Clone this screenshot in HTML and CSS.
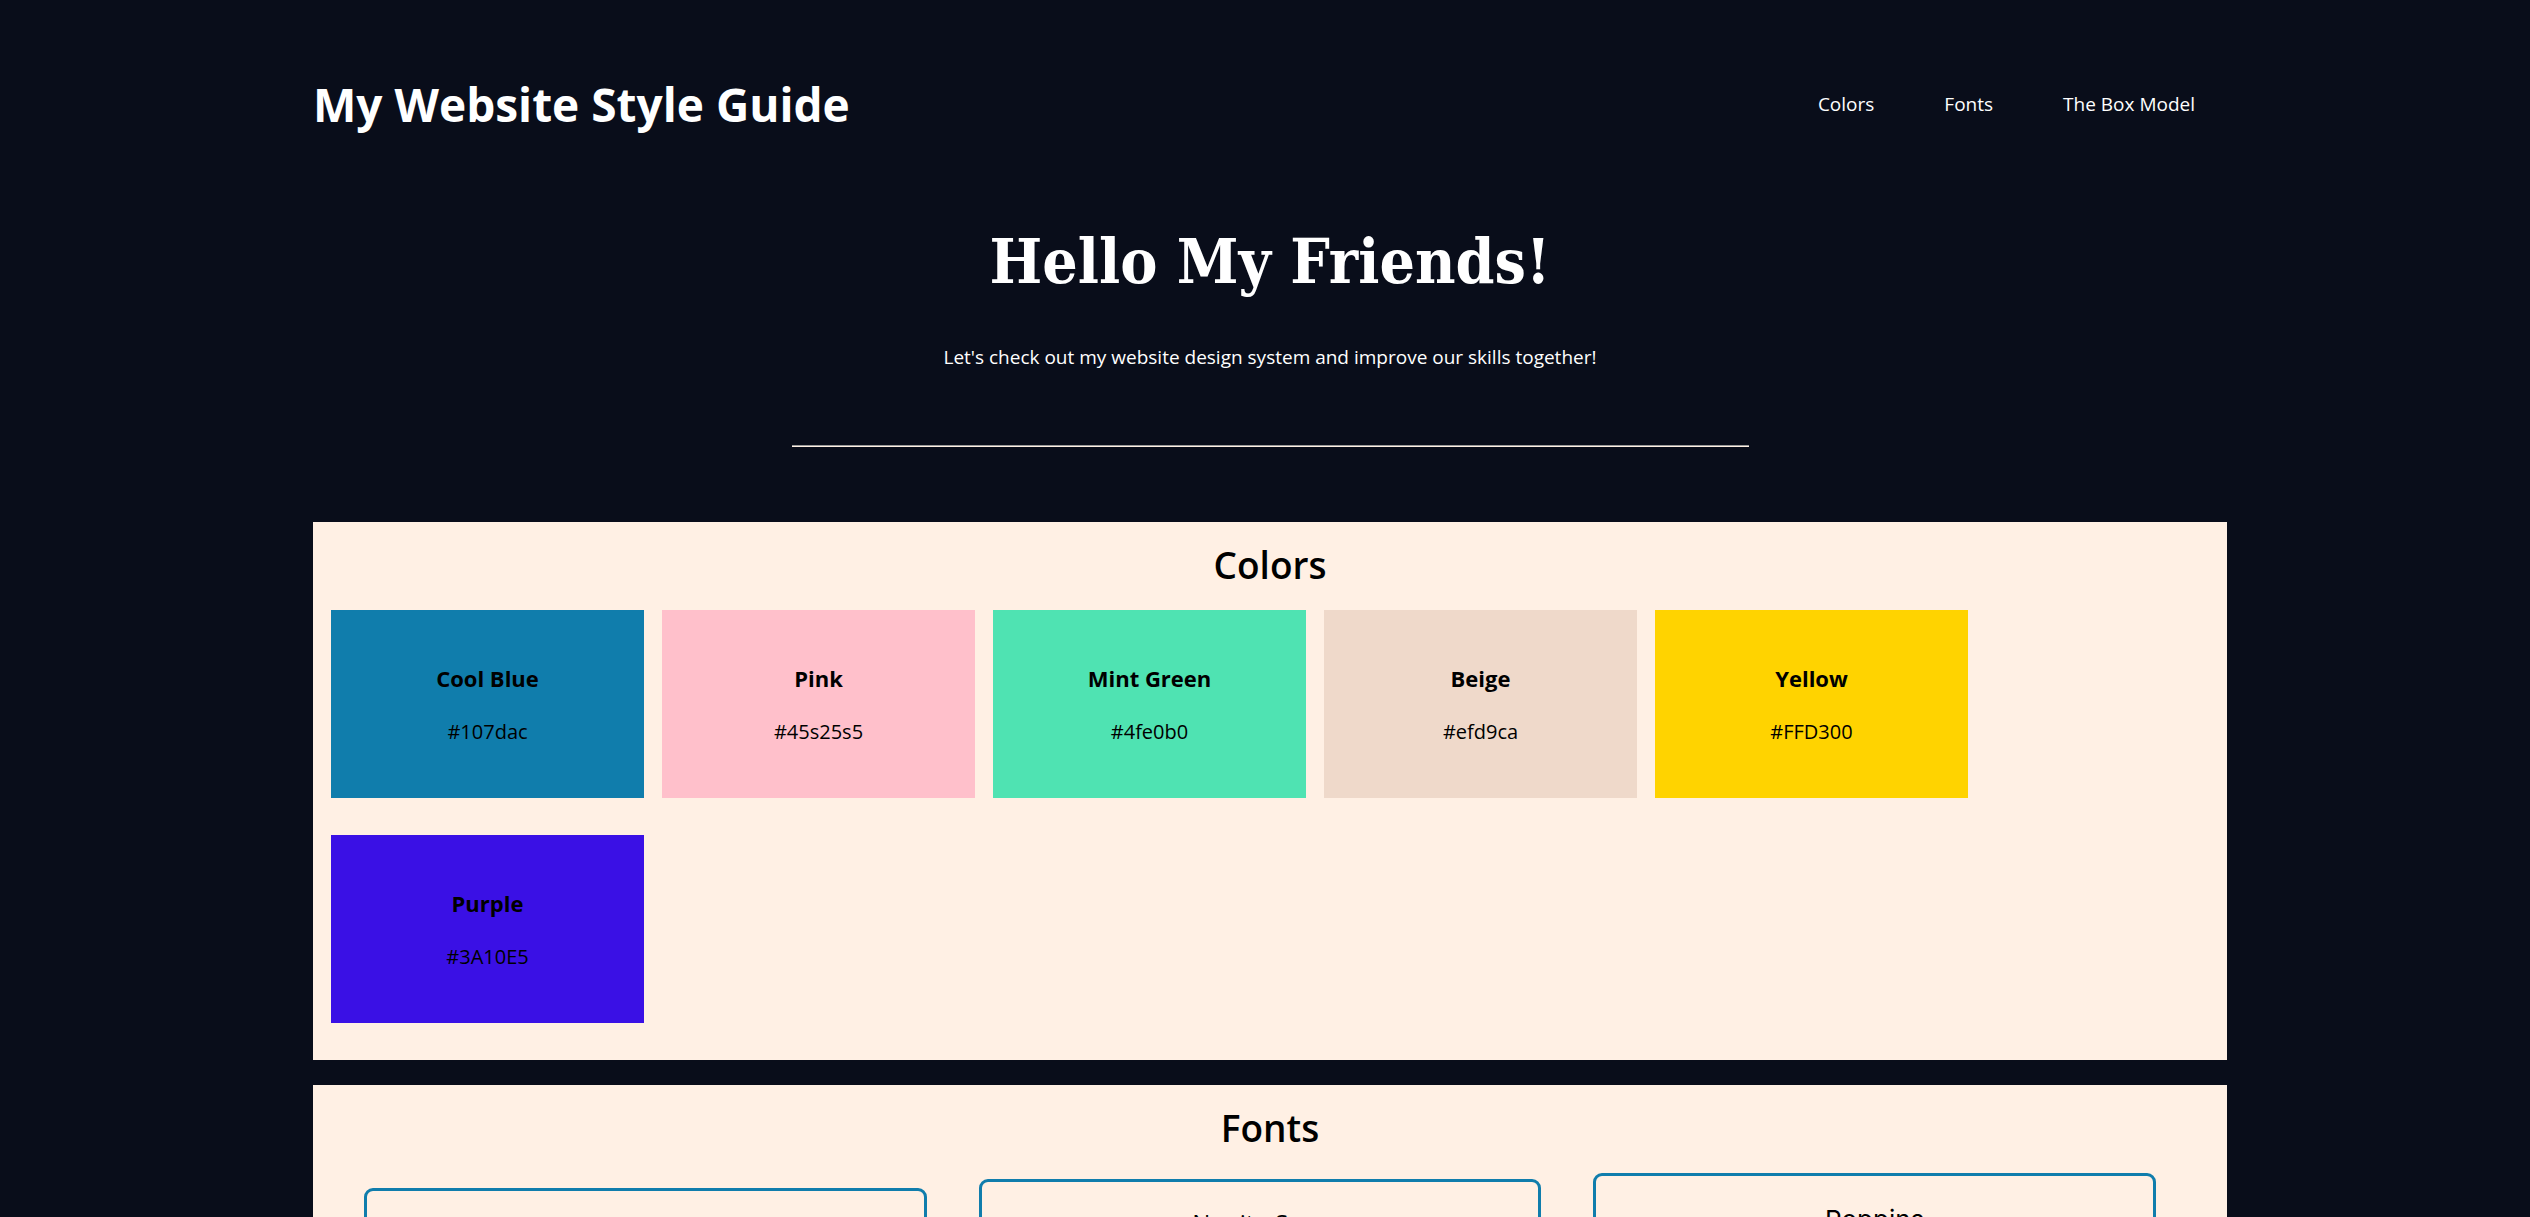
FILE: index.html
```html
<!DOCTYPE html>
<html lang="en">
<head>
<meta charset="utf-8">
<title>My Website Style Guide</title>
<link rel="stylesheet" href="styles.css">
</head>
<body>
<div class="container">
  <header class="site-header">
    <h1 class="site-title">My Website Style Guide</h1>
    <nav class="site-nav">
      <a href="#colors">Colors</a>
      <a href="#fonts">Fonts</a>
      <a href="#box-model">The Box Model</a>
    </nav>
  </header>
  <main>
    <section class="hero">
      <h2 class="hero-title">Hello My Friends!</h2>
      <p class="hero-text">Let's check out my website design system and improve our skills together!</p>
      <hr class="divider">
    </section>
    <section class="panel" id="colors">
      <h2 class="panel-title">Colors</h2>
      <div class="swatches">
        <article class="swatch swatch-blue"><h3>Cool Blue</h3><p>#107dac</p></article>
        <article class="swatch swatch-pink"><h3>Pink</h3><p>#45s25s5</p></article>
        <article class="swatch swatch-mint"><h3>Mint Green</h3><p>#4fe0b0</p></article>
        <article class="swatch swatch-beige"><h3>Beige</h3><p>#efd9ca</p></article>
        <article class="swatch swatch-yellow"><h3>Yellow</h3><p>#FFD300</p></article>
        <article class="swatch swatch-purple"><h3>Purple</h3><p>#3A10E5</p></article>
      </div>
    </section>
    <section class="panel" id="fonts">
      <h2 class="panel-title">Fonts</h2>
      <div class="font-cards">
        <article class="font-card font-display"><p>Oleo Script</p></article>
        <article class="font-card font-nunito"><p>Nunito Sans</p></article>
        <article class="font-card font-poppins"><p>Poppins</p></article>
      </div>
    </section>
  </main>
</div>
</body>
</html>
```
FILE: styles.css
```css
* { box-sizing: border-box; }
body {
  margin: 0;
  padding-left: 10px;
  background: #090d1a;
  color: #000;
  font-family: "Open Sans", "Noto Sans", sans-serif;
  font-size: 20px;
}
h1, h2, h3, p { margin: 0; }
.container { width: 76%; max-width: 1914px; margin: 0 auto; }
.site-header {
  display: flex;
  align-items: center;
  justify-content: space-between;
  padding: 72px 32px 0 0;
  color: #fff;
}
.site-title { font-size: 46px; line-height: 64px; font-weight: 700; }
.site-nav { display: flex; gap: 70px; font-size: 19px; }
.site-nav a { color: #fff; text-decoration: none; line-height: 26px; }
.hero { padding-top: 86px; text-align: center; color: #fff; }
.hero-title {
  font-family: "DejaVu Serif Condensed", "DejaVu Serif", serif;
  font-size: 62px;
  line-height: 80px;
  font-weight: 700;
}
.hero-text { margin-top: 42px; font-size: 19px; line-height: 26px; }
.divider {
  width: 50%;
  height: 2px;
  margin: 75px auto;
  border: 0;
  border-top: 1px solid #999;
  border-bottom: 1px solid #fff0e4;
}
.panel { margin-bottom: 25px; background: #fff0e4; }
.panel-title {
  padding: 17px 0 19px;
  font-size: 37px;
  line-height: 52px;
  font-weight: 600;
  text-align: center;
}
.swatches {
  display: flex;
  flex-wrap: wrap;
  gap: 37px 18px;
  padding: 0 18px 37px;
}
.swatch {
  display: flex;
  flex-direction: column;
  justify-content: center;
  gap: 26px;
  width: 313px;
  min-height: 188px;
  text-align: center;
}
.swatch h3 { font-size: 22px; line-height: 30px; font-weight: 700; }
.swatch p { line-height: 26px; }
.swatch-blue { background: #107dac; }
.swatch-pink { background: #ffc0cb; }
.swatch-mint { background: #4fe3b2; }
.swatch-beige { background: #efd9ca; }
.swatch-yellow { background: #ffd300; }
.swatch-purple { background: #3a10e5; }
.font-cards {
  display: grid;
  grid-template-columns: repeat(3, 1fr);
  gap: 52px;
  align-items: end;
  padding: 0 71px 37px 51px;
}
.font-card {
  padding: 18px 24px 30px;
  border: 3px solid #107dac;
  border-radius: 9px;
  font-size: 24px;
  text-align: center;
}
.font-display { font-family: "DejaVu Serif Condensed", serif; line-height: 36px; }
.font-nunito { line-height: 45px; }
.font-poppins { font-family: Inter, sans-serif; font-size: 26px; line-height: 51px; }
```
